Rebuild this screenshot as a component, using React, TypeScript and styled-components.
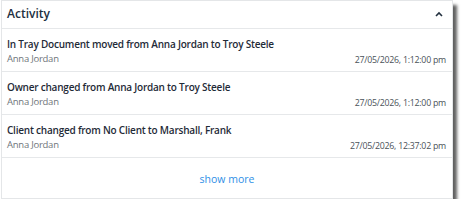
import React from "react";
import styled, { createGlobalStyle } from "styled-components";

const Global = createGlobalStyle`
  html, body { margin: 0; padding: 0; background: #ffffff; }
  body { font-family: "Open Sans", "Noto Sans", sans-serif; }
`;

const Page = styled.div`
  padding: 0 0 0 1px;
`;

const Card = styled.section`
  width: 450px;
  background: #ffffff;
  border: 1px solid #e4e6e8;
  box-shadow: 4px 5px 3px rgba(0, 0, 0, 0.62);
  display: flex;
  flex-direction: column;
`;

const Header = styled.header`
  height: 28px;
  display: flex;
  align-items: center;
  justify-content: space-between;
  padding: 0 9px 2px 5px;
  box-sizing: border-box;
  border-bottom: 1px solid #e6e8ea;
`;

const Title = styled.h2`
  margin: 0;
  font-size: 12px;
  font-weight: 600;
  color: #22303f;
`;

const Caret = styled.svg`
  width: 8px;
  height: 6px;
  color: #22303f;
`;

const Row = styled.div`
  height: 43px;
  padding: 8px 6px 0 5px;
  box-sizing: border-box;
  border-bottom: 1px solid #e6e8ea;
  display: flex;
  flex-direction: column;
`;

const RowTitle = styled.div`
  font-size: 10px;
  font-weight: 600;
  color: #1f2b38;
  line-height: 14px;
  letter-spacing: -0.22px;
`;

const Meta = styled.div`
  display: flex;
  justify-content: space-between;
  align-items: flex-end;
  margin-top: 1px;
`;

const Author = styled.span`
  font-size: 9.5px;
  color: #6f757b;
  line-height: 13px;
  letter-spacing: -0.25px;
`;

const Stamp = styled.span`
  font-size: 8.8px;
  color: #4a5258;
  line-height: 12px;
  letter-spacing: -0.25px;
  margin-bottom: -1px;
`;

const Footer = styled.div`
  height: 40px;
  display: flex;
  align-items: center;
  justify-content: center;
`;

const MoreLink = styled.a`
  font-size: 10.5px;
  color: #2f8fe6;
  text-decoration: none;
  cursor: pointer;
  margin-top: 2px;
`;

const items = [
  {
    text: "In Tray Document moved from Anna Jordan to Troy Steele",
    who: "Anna Jordan",
    when: "27/05/2026, 1:12:00 pm",
  },
  {
    text: "Owner changed from Anna Jordan to Troy Steele",
    who: "Anna Jordan",
    when: "27/05/2026, 1:12:00 pm",
  },
  {
    text: "Client changed from No Client to Marshall, Frank",
    who: "Anna Jordan",
    when: "27/05/2026, 12:37:02 pm",
  },
];

export default function App() {
  return (
    <Page>
      <Global />
      <Card>
        <Header>
          <Title>Activity</Title>
          <Caret viewBox="0 0 8 6">
            <path d="M1 5 L4 2 L7 5" fill="none" stroke="currentColor" strokeWidth="1.6" />
          </Caret>
        </Header>
        {items.map((it, i) => (
          <Row key={i}>
            <RowTitle>{it.text}</RowTitle>
            <Meta>
              <Author>{it.who}</Author>
              <Stamp>{it.when}</Stamp>
            </Meta>
          </Row>
        ))}
        <Footer>
          <MoreLink>show more</MoreLink>
        </Footer>
      </Card>
    </Page>
  );
}
